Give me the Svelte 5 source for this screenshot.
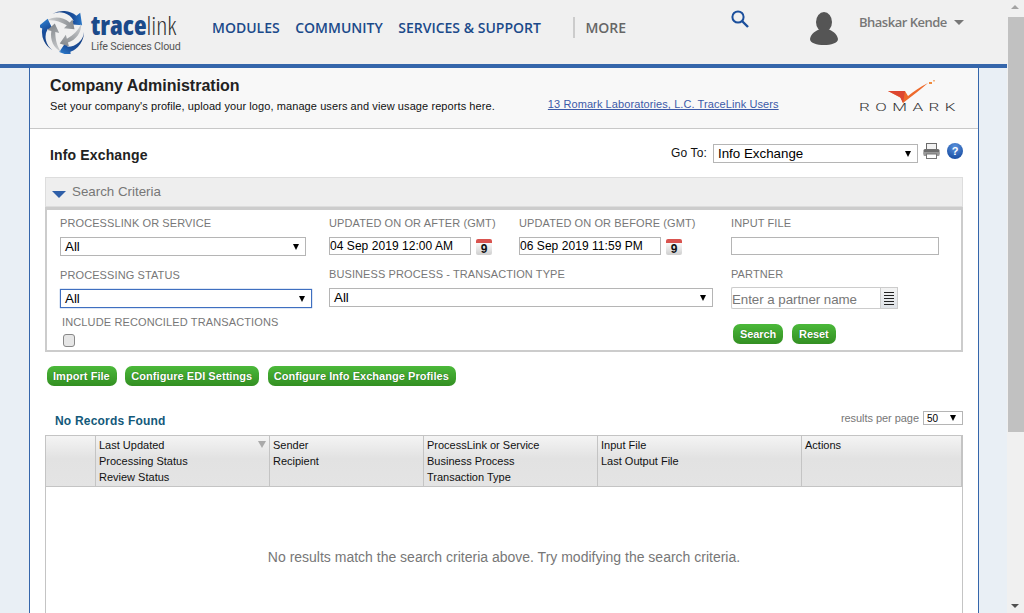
<script>
	const navItems = ['MODULES', 'COMMUNITY', 'SERVICES & SUPPORT'];
	const blades = [0, 120, 240];
	const columns = [
		{ width: 50, lines: [] },
		{ width: 174, lines: ['Last Updated', 'Processing Status', 'Review Status'], sort: true },
		{ width: 154, lines: ['Sender', 'Recipient'] },
		{ width: 174, lines: ['ProcessLink or Service', 'Business Process', 'Transaction Type'] },
		{ width: 204, lines: ['Input File', 'Last Output File'] },
		{ width: 161, lines: ['Actions'] }
	];
</script>

<div class="shell">
	<div class="page">
		<header class="topbar">
			<div class="logo">
				<svg class="swirl" width="46" height="44" viewBox="0 0 48 46">
					<defs>
						<linearGradient id="blue" x1="0" y1="0" x2="1" y2="0">
							<stop offset="0" stop-color="#143a78" />
							<stop offset="0.7" stop-color="#1a4f9c" />
							<stop offset="1" stop-color="#2a78c8" />
						</linearGradient>
						<linearGradient id="steel" x1="0" y1="0" x2="1" y2="0">
							<stop offset="0" stop-color="#d0d2d4" />
							<stop offset="1" stop-color="#85898d" />
						</linearGradient>
					</defs>
					{#each blades as angle}
						<g transform="rotate({angle} 24 23)">
							<path d="M13 4 A22 22 0 0 1 38 6 L42 3 L44 16 L31 15 L35 11 A17 17 0 0 0 13 4Z" fill="url(#blue)" />
							<path d="M7 11 C14 6 24 7 31 13 L34 10 L36 20 L25 19 L28 16 C21 12 14 10 7 11Z" fill="url(#steel)" />
						</g>
					{/each}
				</svg>
				<div class="wordmark">
					<div class="brand"><b>trace</b><span>link</span></div>
					<div class="tagline">Life Sciences Cloud</div>
				</div>
			</div>
			<nav class="nav">
				{#each navItems as item}
					<span class="nav-item">{item}</span>
				{/each}
				<span class="nav-more">MORE</span>
			</nav>
			<svg class="search-icon" width="20" height="20" viewBox="0 0 20 20">
				<circle cx="8" cy="8" r="5.6" fill="none" stroke="#1b4f9c" stroke-width="2" />
				<path d="M12 12 L18 18" stroke="#1b4f9c" stroke-width="2.4" />
			</svg>
			<svg class="avatar" width="28" height="33" viewBox="0 0 28 33">
				<ellipse cx="14" cy="10" rx="8" ry="10" fill="#555" />
				<path d="M0 27 C1 21 6 19 10 17 L18 17 C22 19 27 21 28 27 C28 31 21 33 14 33 C7 33 0 31 0 27Z" fill="#555" />
			</svg>
			<div class="user">Bhaskar Kende<i class="user-caret"></i></div>
		</header>
		<div class="accent"></div>

		<main class="panel">
			<section class="company">
				<div class="company-text">
					<h1>Company Administration</h1>
					<p>Set your company's profile, upload your logo, manage users and view usage reports here.</p>
				</div>
				<a class="users-link" href="#users">13 Romark Laboratories, L.C. TraceLink Users</a>
				<div class="romark">
					<svg width="54" height="27" viewBox="0 0 54 27">
						<path d="M3 15 L20 15 L23 20 C29 15 35 11 43 7 C36 13 27 20 18 27 L16 22Z" fill="#ee6a2c" />
						<path d="M3 15 L20 15 L18 27 L15 21Z" fill="#dd4630" />
						<rect x="44" y="6" width="3" height="2" fill="#f08a3c" />
						<rect x="48" y="4" width="2" height="1.5" fill="#f4b27e" />
					</svg>
					<span>ROMARK</span>
				</div>
			</section>

			<section class="content">
				<div class="title-row">
					<h2>Info Exchange</h2>
					<div class="goto">
						<span>Go To:</span>
						<div class="select goto-select"><span>Info Exchange</span><i></i></div>
						<svg class="printer" width="17" height="16" viewBox="0 0 17 16">
							<rect x="3.5" y="0.5" width="10" height="6" fill="#f2f2f2" stroke="#6b6b6b" />
							<rect x="0.5" y="6" width="16" height="6" rx="1.5" fill="#6e6e6e" />
							<rect x="0.5" y="9" width="16" height="4" rx="1" fill="#999" />
							<rect x="3.5" y="11" width="10" height="4.5" fill="#fff" stroke="#777" />
						</svg>
						<span class="help">?</span>
					</div>
				</div>

				<div class="criteria-bar"><i class="criteria-caret"></i>Search Criteria</div>
				<form class="criteria">
					<div class="field f-service">
						<span class="label">PROCESSLINK OR SERVICE</span>
						<div class="select"><span>All</span><i></i></div>
					</div>
					<div class="field f-after">
						<span class="label">UPDATED ON OR AFTER (GMT)</span>
						<div class="date-row">
							<input class="date" value="04 Sep 2019 12:00 AM" />
							<span class="cal"><b>9</b></span>
						</div>
					</div>
					<div class="field f-before">
						<span class="label">UPDATED ON OR BEFORE (GMT)</span>
						<div class="date-row">
							<input class="date" value="06 Sep 2019 11:59 PM" />
							<span class="cal"><b>9</b></span>
						</div>
					</div>
					<div class="field f-input">
						<span class="label">INPUT FILE</span>
						<input class="text" />
					</div>
					<div class="field f-status">
						<span class="label">PROCESSING STATUS</span>
						<div class="select focused"><span>All</span><i></i></div>
					</div>
					<div class="field f-type">
						<span class="label">BUSINESS PROCESS - TRANSACTION TYPE</span>
						<div class="select"><span>All</span><i></i></div>
					</div>
					<div class="field f-partner">
						<span class="label">PARTNER</span>
						<div class="partner-row">
							<input class="partner" placeholder="Enter a partner name" />
							<span class="lookup"><i></i></span>
						</div>
					</div>
					<div class="field f-reconciled">
						<span class="label">INCLUDE RECONCILED TRANSACTIONS</span>
						<span class="check"></span>
					</div>
					<div class="form-actions">
						<button type="button" class="btn">Search</button>
						<button type="button" class="btn">Reset</button>
					</div>
				</form>

				<div class="action-row">
					<button type="button" class="btn">Import File</button>
					<button type="button" class="btn">Configure EDI Settings</button>
					<button type="button" class="btn">Configure Info Exchange Profiles</button>
				</div>

				<div class="results-head">
					<strong>No Records Found</strong>
					<div class="per-page">
						<span>results per page</span>
						<div class="select mini"><span>50</span><i></i></div>
					</div>
				</div>

				<div class="table">
					<div class="thead">
						{#each columns as col}
							<div class="th" style="width: {col.width}px">
								{#each col.lines as line}
									<div>{line}</div>
								{/each}
								{#if col.sort}<i class="sort"></i>{/if}
							</div>
						{/each}
					</div>
					<div class="tbody">No results match the search criteria above. Try modifying the search criteria.</div>
				</div>
			</section>
		</main>
	</div>

	<div class="scrollbar">
		<i class="arrow-up"></i>
		<div class="thumb"></div>
		<i class="arrow-down"></i>
	</div>
</div>

<style>
	:global(body) {
		margin: 0;
		overflow: hidden;
		font-family: "Liberation Sans", Arial, sans-serif;
	}

	.shell {
		display: flex;
		height: 613px;
		overflow: hidden;
		background: #e9eff5;
	}

	.page {
		width: 1007px;
		flex: none;
	}

	.topbar {
		display: flex;
		height: 64px;
		background: #f0f0f0;
	}

	.logo {
		display: flex;
		margin: 10px 0 0 40px;
		width: 172px;
		flex: none;
	}

	.swirl {
		flex: none;
	}

	.wordmark {
		margin: 1px 0 0 5px;
	}

	.brand {
		font-family: "Open Sans", sans-serif;
		font-stretch: 75%;
		font-size: 26px;
		line-height: 29px;
		color: #333;
		white-space: nowrap;
	}

	.brand b {
		color: #1b4a8a;
		font-weight: 800;
	}

	.brand span {
		font-weight: 300;
	}

	.tagline {
		font-family: "Roboto", sans-serif;
		font-size: 10.7px;
		line-height: 12px;
		letter-spacing: -0.2px;
		color: #555;
		margin-top: 1px;
	}

	.nav {
		display: flex;
		align-items: center;
		flex: none;
		width: 518px;
		height: 54px;
		font-family: "Open Sans", sans-serif;
		font-size: 14px;
		font-weight: 600;
		color: #1b4a8a;
	}

	.nav-item {
		margin-right: 15.5px;
	}

	.nav-more {
		margin-left: 17px;
		padding-left: 10px;
		border-left: 2px solid #ccc;
		color: #666;
		line-height: 21px;
	}

	.search-icon {
		margin: 9px 0 0 0;
	}

	.avatar {
		margin: 12px 0 0 60px;
	}

	.user {
		margin: 13px 0 0 21px;
		font-family: "Open Sans", sans-serif;
		font-size: 13px;
		line-height: 18px;
		font-weight: 600;
		color: #777;
		letter-spacing: -0.5px;
	}

	.user-caret {
		display: inline-block;
		margin: 0 0 2px 7px;
		border: 5px solid transparent;
		border-top-color: #777;
		border-bottom-width: 0;
	}

	.accent {
		height: 4px;
		background: #3566ab;
	}

	.panel {
		margin-left: 29px;
		width: 950px;
		height: 545px;
		box-sizing: border-box;
		background: #fff;
		border-left: 1px solid #3566ab;
		border-right: 1px solid #3566ab;
		color: #111;
	}

	.company {
		display: flex;
		height: 61px;
		box-sizing: border-box;
		background: #f8f8f8;
		border-bottom: 1px solid #c8c8c8;
		padding-left: 20px;
	}

	.company-text h1 {
		margin: 9px 0 0;
		font-size: 16px;
		line-height: 18px;
		font-weight: 700;
		color: #222;
	}

	.company-text p {
		margin: 4px 0 0;
		font-size: 11px;
		line-height: 14px;
		letter-spacing: 0.085px;
	}

	.users-link {
		margin: 29px 0 0 53px;
		font-size: 11px;
		line-height: 14px;
		color: #3c5aa8;
		letter-spacing: 0.09px;
	}

	.romark {
		margin: 8px 13px 0 auto;
		display: flex;
		flex-direction: column;
		width: 115px;
	}

	.romark svg {
		margin-left: 35px;
		flex: none;
	}

	.romark span {
		font-family: "Roboto", sans-serif;
		font-size: 10px;
		font-weight: 300;
		line-height: 9px;
		letter-spacing: 3.2px;
		margin: 0 0 0 9px;
		color: #333;
		white-space: nowrap;
		transform: scaleX(1.7);
		transform-origin: 0 0;
	}

	.content {
		padding: 0 15px;
	}

	.title-row {
		display: flex;
		justify-content: space-between;
		height: 48px;
	}

	.title-row h2 {
		margin: 18px 0 0 5px;
		font-size: 14px;
		line-height: 17px;
		letter-spacing: 0.15px;
		color: #222;
	}

	.goto {
		display: flex;
		align-items: flex-start;
		margin-top: 15px;
		font-size: 12px;
		line-height: 18px;
	}

	.goto > span:first-child {
		margin-right: 6px;
		line-height: 19px;
		letter-spacing: 0.15px;
	}

	.select {
		display: flex;
		align-items: center;
		justify-content: space-between;
		box-sizing: border-box;
		height: 19px;
		border: 1px solid #b5b5b5;
		background: #fff;
		padding: 0 6px 0 4px;
		font-size: 13.33px;
		color: #000;
	}

	.select i {
		width: 0;
		height: 0;
		border: 3.5px solid transparent;
		border-top: 6px solid #000;
		border-bottom: 0;
	}

	.goto-select {
		width: 205px;
	}

	.printer {
		margin: -1px 0 0 5px;
	}

	.help {
		box-sizing: border-box;
		width: 16px;
		height: 16px;
		margin: -1px 0 0 7px;
		border-radius: 50%;
		background: radial-gradient(circle at 50% 25%, #5b93de, #1f54a8 75%);
		color: #fff;
		font-size: 11px;
		font-weight: 700;
		line-height: 16px;
		text-align: center;
	}

	.criteria-bar {
		display: flex;
		align-items: center;
		height: 30px;
		box-sizing: border-box;
		background: #eee;
		border: 1px solid #ddd;
		font-size: 13.33px;
		color: #777;
		padding: 0 0 2px 6px;
	}

	.criteria-caret {
		width: 0;
		height: 0;
		border: 7px solid transparent;
		border-top: 7px solid #2f5fa8;
		border-bottom: 0;
		margin: 6px 6px 0 0;
	}

	.criteria {
		display: grid;
		grid-template-columns: 269px 190px 212px 1fr;
		grid-template-rows: 52px 47px 1fr;
		box-sizing: border-box;
		height: 145px;
		border: 2px solid #ccc;
		border-top-width: 3px;
		padding: 7px 0 0 13px;
	}

	.field {
		min-width: 0;
	}

	.label {
		display: block;
		font-size: 11px;
		line-height: 13px;
		color: #777;
		letter-spacing: 0.1px;
		margin-bottom: 7px;
	}

	.f-service .select {
		width: 246px;
	}

	.f-status {
		grid-row: 2;
		grid-column: 1;
	}

	.focused {
		width: 252px;
		border-color: #3f6fc0;
		box-shadow: 0 0 1px #3f6fc0;
	}

	.f-type {
		grid-row: 2;
		grid-column: 2 / 4;
		width: 384px;
		margin-top: -1px;
	}

	.f-partner {
		grid-row: 2;
		grid-column: 4;
		margin-top: -1px;
	}

	.partner-row {
		display: flex;
		height: 22px;
		margin-top: -1px;
	}

	.partner {
		box-sizing: border-box;
		width: 149px;
		height: 22px;
		border: 1px solid #ccc;
		border-right: 0;
		padding: 2px 0 0;
		font: 13.33px "Liberation Sans", Arial, sans-serif;
		letter-spacing: -0.05px;
		border-radius: 2px 0 0 2px;
	}

	.partner::placeholder {
		color: #777;
		opacity: 1;
	}

	.lookup {
		display: flex;
		align-items: center;
		justify-content: center;
		box-sizing: border-box;
		width: 18px;
		height: 22px;
		border: 1px solid #ccc;
		background: linear-gradient(#f3f3f3, #dfe3e8);
	}

	.lookup i {
		width: 10px;
		height: 13px;
		background: repeating-linear-gradient(#222 0 1px, transparent 1px 3px);
	}

	.date-row {
		display: flex;
		align-items: flex-start;
	}

	.date {
		box-sizing: border-box;
		width: 142px;
		height: 18px;
		border: 1px solid #b5b5b5;
		padding: 0;
		font: 12px "Liberation Sans", Arial, sans-serif;
		letter-spacing: 0.05px;
		color: #000;
	}

	.text {
		display: block;
		box-sizing: border-box;
		width: 208px;
		height: 18px;
		border: 1px solid #b5b5b5;
		padding: 0 2px;
	}

	.cal {
		box-sizing: border-box;
		width: 16px;
		height: 16px;
		margin: 2px 0 0 5px;
		border-radius: 2px;
		border-top: 4px solid #d9534f;
		background: linear-gradient(#fafafa, #cfcfcf);
		font-size: 12px;
		line-height: 12px;
		text-align: center;
	}

	.f-reconciled {
		grid-row: 3;
		grid-column: 1;
		padding-left: 2px;
	}

	.f-reconciled .label {
		margin: 0 0 5px;
		letter-spacing: 0.13px;
	}

	.check {
		display: block;
		box-sizing: border-box;
		width: 12px;
		height: 13px;
		border: 1px solid #888;
		border-radius: 3px;
		background: #e6e6e6;
		margin-left: 1px;
	}

	.form-actions {
		grid-row: 3;
		grid-column: 4;
		display: flex;
		gap: 9px;
		padding: 8px 0 0 2px;
	}

	.btn {
		height: 20px;
		padding: 0 7px 0 6px;
		border: 0;
		border-radius: 7px;
		background: linear-gradient(#4bb93a, #338f22);
		color: #fff;
		font: 700 11px "Liberation Sans", Arial, sans-serif;
		letter-spacing: 0.05px;
		text-shadow: 0 0 1px #1c5c10;
	}

	.form-actions .btn {
		padding: 0 7px;
		letter-spacing: -0.1px;
	}

	.action-row {
		display: flex;
		gap: 8.5px;
		padding: 14px 0 0 2px;
	}

	.results-head {
		display: flex;
		justify-content: space-between;
		align-items: flex-start;
		margin-top: 25px;
		height: 24px;
		padding-left: 10px;
	}

	.results-head strong {
		margin-top: 2px;
		font-size: 12px;
		line-height: 16px;
		letter-spacing: 0.2px;
		color: #13597a;
	}

	.per-page {
		display: flex;
		align-items: center;
		gap: 4px;
		font-size: 11px;
		letter-spacing: -0.05px;
		color: #777;
	}

	.mini {
		width: 40px;
		height: 14px;
		font-size: 10px;
		padding: 0 6px 0 3px;
	}

	.table {
		border: 1px solid #c4c4c4;
		width: 918px;
		box-sizing: border-box;
		height: 300px;
	}

	.thead {
		display: flex;
		height: 51px;
		box-sizing: border-box;
		border-bottom: 1px solid #c4c4c4;
		border-right: 1px solid #c4c4c4;
		background: linear-gradient(#f4f4f4, #e2e2e2 45%, #e4e4e4);
	}

	.th {
		position: relative;
		flex: none;
		box-sizing: border-box;
		padding: 1px 3px;
		border-right: 1px solid #c4c4c4;
		font-size: 11px;
		line-height: 16px;
		color: #111;
	}

	.th:last-child {
		border-right: 0;
	}

	.sort {
		position: absolute;
		top: 5px;
		right: 3px;
		width: 0;
		height: 0;
		border: 4px solid transparent;
		border-top: 7px solid #aaa;
		border-bottom: 0;
	}

	.tbody {
		padding-top: 62px;
		text-align: center;
		font-size: 14px;
		line-height: 16px;
		color: #777;
	}

	.scrollbar {
		position: relative;
		flex: 1;
		background: #f0f0f0;
	}

	.thumb {
		position: absolute;
		top: 17px;
		left: 1px;
		right: 0;
		height: 415px;
		background: #c1c1c1;
	}

	.arrow-up,
	.arrow-down {
		position: absolute;
		left: 4px;
		width: 0;
		height: 0;
		border: 4px solid transparent;
	}

	.arrow-up {
		top: 5px;
		border-bottom: 4px solid #a3a3a3;
		border-top: 0;
	}

	.arrow-down {
		bottom: 5px;
		border-top: 4px solid #505050;
		border-bottom: 0;
	}
</style>
